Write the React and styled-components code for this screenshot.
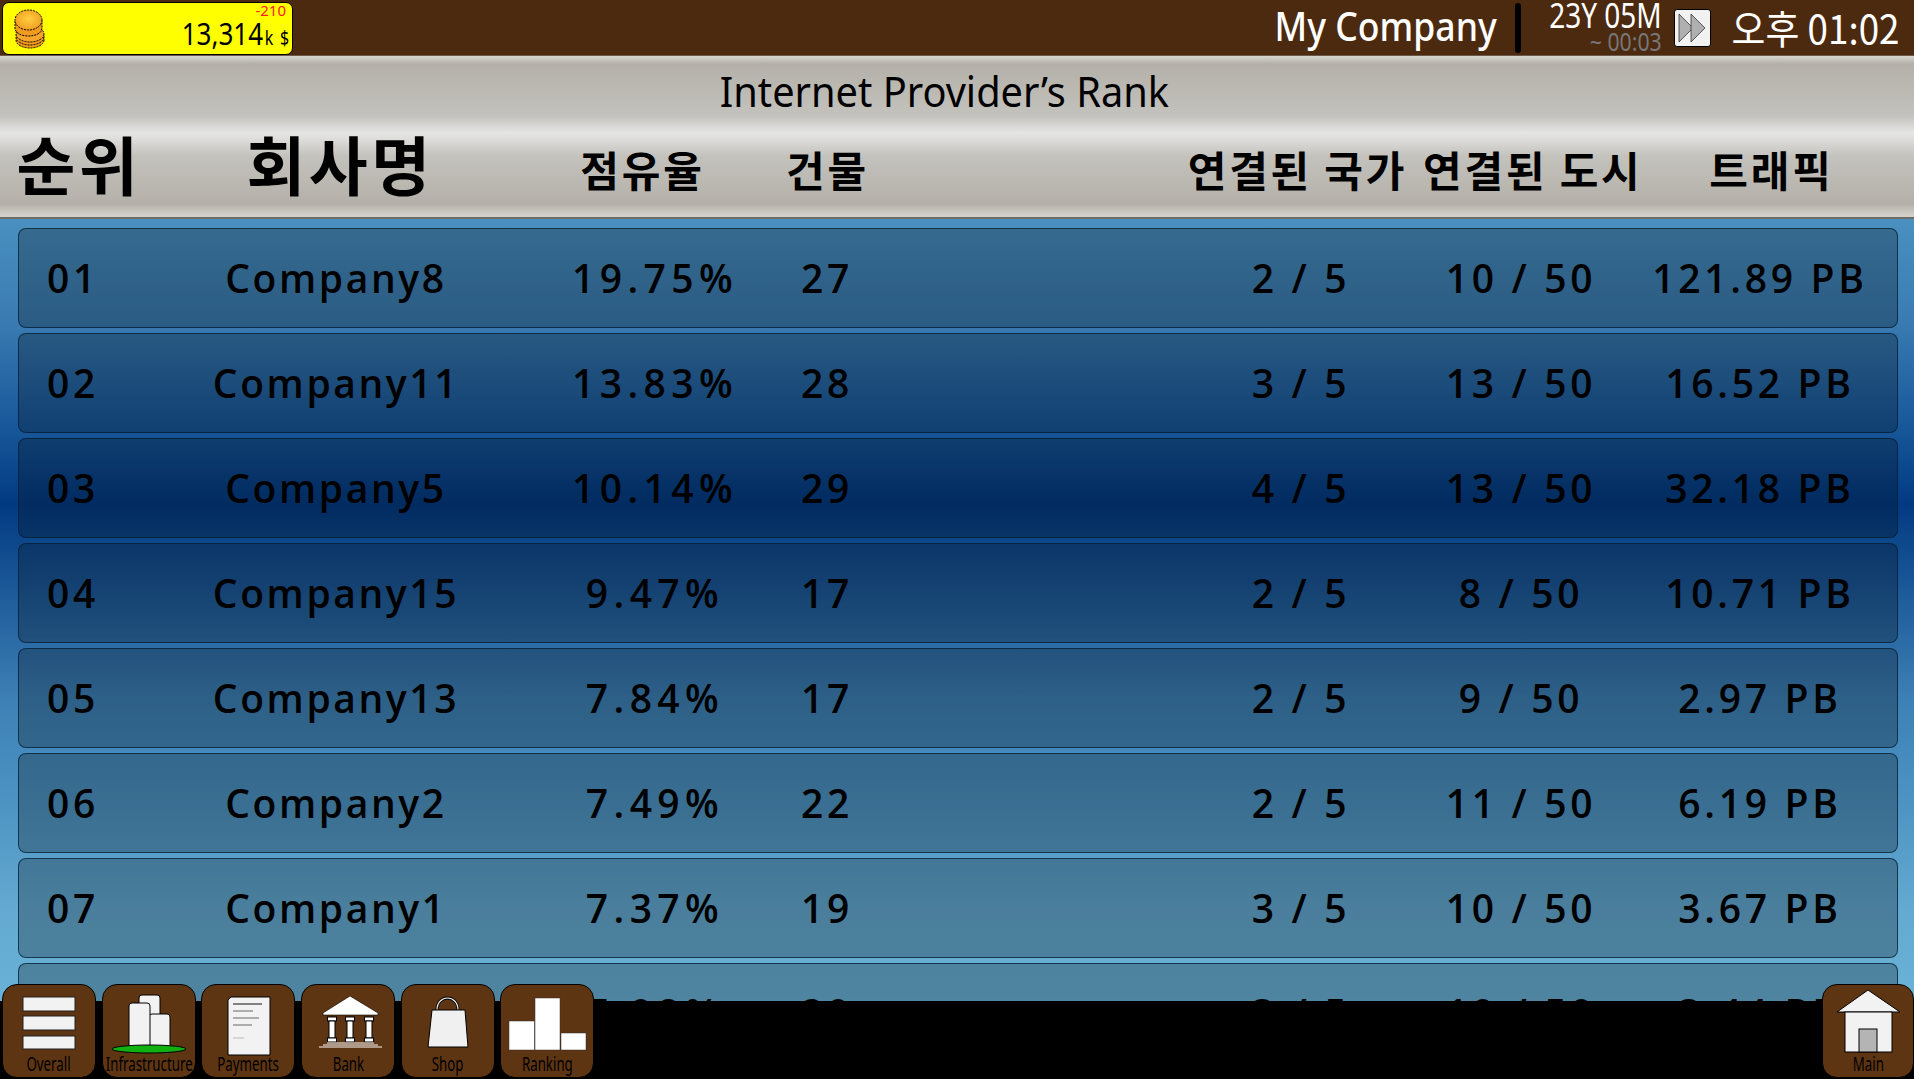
import React from "react";
import styled, { createGlobalStyle } from "styled-components";

const GlobalStyle = createGlobalStyle`
  html, body {
    margin: 0;
    padding: 0;
    height: 100%;
    background: #000;
    overflow: hidden;
  }
  #root {
    height: 100%;
  }
`;

const SANS = `"Noto Sans", "Noto Sans CJK KR", sans-serif`;
const CJK = `"Noto Sans CJK KR", "Noto Sans", sans-serif`;

const Page = styled.div`
  width: 1914px;
  height: 1079px;
  display: flex;
  flex-direction: column;
  overflow: hidden;
`;

const TopBar = styled.header`
  height: 55px;
  flex: none;
  background: #4c2a10;
  border-bottom: 1px solid #6b5a4c;
  display: flex;
  align-items: center;
  justify-content: space-between;
  padding: 0 15px 0 2px;
  color: #fff;
  font-family: ${SANS};
`;

const Money = styled.div`
  width: 291px;
  height: 53px;
  margin-top: 1px;
  box-sizing: border-box;
  background: #ffff00;
  border: 1px solid #000;
  border-radius: 7px;
  display: flex;
  align-items: center;
  justify-content: space-between;
  padding: 0 2px 0 11px;
  color: #000;
`;

const MoneyText = styled.div`
  display: flex;
  flex-direction: column;
  align-items: flex-end;
`;

const MoneyDelta = styled.span`
  color: #ff2020;
  font-size: 15px;
  line-height: 15px;
  margin-right: 4px;
`;

const MoneyValue = styled.span`
  font-size: 31px;
  line-height: 31px;
  transform: scaleX(0.84);
  transform-origin: right center;

  small {
    font-size: 19px;
    margin-left: 2px;
    letter-spacing: 1.5px;
  }
`;

const StatusGroup = styled.div`
  display: flex;
  align-items: center;
`;

const CompanyName = styled.span`
  font-size: 40px;
  line-height: 50px;
  margin-bottom: 3px;
  font-weight: 500;
  transform: scaleX(0.89);
  transform-origin: right center;
`;

const Divider = styled.span`
  width: 6px;
  height: 50px;
  border-radius: 3px;
  background: #000;
  margin: 0 0 0 18px;
`;

const DateBlock = styled.div`
  display: flex;
  flex-direction: column;
  align-items: flex-end;
  margin-bottom: 5px;
`;

const DateMain = styled.span`
  font-size: 35px;
  line-height: 32px;
  transform: scaleX(0.8);
  transform-origin: right center;
`;

const DateSub = styled.span`
  font-size: 25px;
  line-height: 20px;
  color: #777;
  transform: scaleX(0.85);
  transform-origin: right center;
`;

const SpeedButton = styled.button`
  width: 37px;
  height: 38px;
  margin: 0 6px 0 12px;
  padding: 0;
  background: #f2f2f2;
  border: 1px solid #000;
  border-radius: 3px;
  display: flex;
  align-items: center;
  justify-content: center;
`;

const Clock = styled.span`
  font-family: ${CJK};
  font-size: 40px;
  line-height: 55px;
  transform: scaleX(0.92);
  transform-origin: right center;
`;

const RankHeader = styled.div`
  height: 163px;
  flex: none;
  box-sizing: border-box;
  border-bottom: 2px solid #6f6c68;
  background: linear-gradient(
    to bottom,
    #d8d6d0 0,
    #b4b0a9 8px,
    #c4c2bd 60px,
    #e6e6e6 77px,
    #c4c2bd 100px,
    #b4b0a9 148px,
    #d2cfca 159px,
    #d2cfca 100%
  );
  color: #000;
`;

const Title = styled.h1`
  margin: 0;
  height: 63px;
  padding: 5px 26px 0 0;
  box-sizing: border-box;
  text-align: center;
  font-family: ${SANS};
  font-size: 41px;
  font-weight: 400;
  line-height: 60px;
  transform: scaleX(0.97);
`;

const HeaderGrid = styled.div`
  display: grid;
  grid-template-columns: 152px 370px 238px 132px 280px 248px 216px 268px;
  align-items: center;
  height: 86px;
`;

const HeaderCell = styled.span`
  text-align: center;
  font-family: ${CJK};
  font-weight: 700;
  font-size: ${(p) => (p.$large ? 64 : 42)}px;
  letter-spacing: ${(p) => (p.$large ? 3.5 : 2.8)}px;
  line-height: 1;
  padding: ${(p) => (p.$large ? 0 : 14)}px 0 0 ${(p) => (p.$large ? 6 : 3)}px;
  white-space: nowrap;
  grid-column: ${(p) => p.$col || "auto"};
`;

const List = styled.main`
  flex: 1;
  min-height: 0;
  overflow: hidden;
  display: flex;
  flex-direction: column;
  gap: 5px;
  padding: 9px 16px 0 18px;
  background: linear-gradient(
    to bottom,
    #4a90c0 0,
    #3a7cb2 100px,
    #1a5a9c 200px,
    #023a82 285px,
    #3d80b5 480px,
    #4d94c3 585px,
    #63a9d1 690px,
    #6ab2d6 783px
  );
`;

const Row = styled.div`
  flex: none;
  height: 100px;
  box-sizing: border-box;
  border: 1px solid rgba(5, 30, 50, 0.75);
  border-radius: 8px;
  background: rgba(0, 0, 0, 0.25);
  display: grid;
  grid-template-columns: 108px 418px 220px 124px 300px 224px 216px 262px;
  align-items: center;
  color: #000;
  font-family: "Open Sans", sans-serif;
  font-size: 39px;
  font-weight: 600;
  letter-spacing: 3.7px;
  white-space: nowrap;
`;

const Cell = styled.span`
  text-align: center;
  padding-bottom: 1px;
  grid-column: ${(p) => p.$col || "auto"};
  letter-spacing: ${(p) => p.$spacing || "inherit"};
`;

const Dock = styled.footer`
  height: 77px;
  flex: none;
  background: #000;
  display: flex;
  align-items: flex-end;
  gap: 5.7px;
  padding: 0 0 1px 2px;
  position: relative;
`;

const DockButton = styled.button`
  width: ${(p) => p.$width || 94}px;
  height: 94px;
  flex: none;
  margin-left: ${(p) => (p.$end ? "auto" : 0)};
  box-sizing: border-box;
  padding: 0;
  background: #5e3513;
  border: 1px solid #000;
  border-radius: 15px;
  display: flex;
  flex-direction: column;
  align-items: center;
  font: inherit;
  color: #000;
`;

const DockIcon = styled.svg`
  width: 88px;
  height: 60px;
  flex: none;
  margin-top: 11px;
  overflow: visible;
`;

const DockLabel = styled.span`
  font-family: ${SANS};
  font-size: 19px;
  line-height: 17px;
  white-space: nowrap;
  transform: scaleX(0.7);
`;

const CoinIcon = () => (
  <svg width="32" height="42" viewBox="0 0 32 42">
    <defs>
      <radialGradient id="coin" cx="50%" cy="45%" r="60%">
        <stop offset="0" stopColor="#ffcf3f" />
        <stop offset="1" stopColor="#f09a20" />
      </radialGradient>
    </defs>
    <g stroke="#000" strokeDasharray="2 1" strokeWidth="1">
      <ellipse cx="16" cy="33" rx="14" ry="8" fill="#f09a20" />
      <ellipse cx="16" cy="30" rx="14" ry="8" fill="#f09a20" />
      <ellipse cx="16" cy="27" rx="14" ry="8" fill="#f4a52a" />
      <path d="M1 14v7c0 5 6 8 13.5 8S28 26 28 21v-7" fill="#f09a20" />
      <ellipse cx="14.5" cy="13" rx="13.5" ry="10" fill="url(#coin)" />
    </g>
  </svg>
);

const FastForward = () => (
  <svg width="30" height="32" viewBox="0 0 30 32">
    <path d="M2 2 L16 16 L2 30 Z" fill="#b0b0b0" stroke="#222" strokeWidth="0.7" />
    <path d="M14 2 L28 16 L14 30 Z" fill="#b0b0b0" stroke="#222" strokeWidth="0.7" />
  </svg>
);

const OverallIcon = () => (
  <DockIcon viewBox="0 0 88 60">
    <g fill="#f2f2f2" stroke="#222" strokeWidth="1">
      <rect x="18" y="1" width="52" height="14" />
      <rect x="18" y="20" width="52" height="14" />
      <rect x="18" y="40" width="52" height="13" />
    </g>
  </DockIcon>
);

const InfraIcon = () => (
  <DockIcon viewBox="0 0 88 60">
    <g fill="#f2f2f2" stroke="#000" strokeWidth="1">
      <rect x="34" y="-1" width="21" height="40" rx="3" />
      <rect x="44" y="18" width="21" height="35" rx="3" />
      <rect x="24" y="7" width="21" height="46" rx="3" />
    </g>
    <ellipse cx="44" cy="53" rx="37" ry="4" fill="#10b010" stroke="#000" strokeWidth="1" />
  </DockIcon>
);

const PaymentsIcon = () => (
  <DockIcon viewBox="0 0 88 60">
    <path d="M24 4 L27 1 H66 V59 H24 Z" fill="#f2f2f2" stroke="#000" strokeWidth="1" />
    <g strokeWidth="1">
      <path d="M29 8 H58" stroke="#111" />
      <path d="M29 15 H49" stroke="#666" />
      <path d="M29 22 H55" stroke="#666" />
      <path d="M29 29 H48" stroke="#666" />
      <path d="M29 42 H40" stroke="#bbb" />
    </g>
  </DockIcon>
);

const BankColumn = ({ x }) => (
  <g fill="#fff" stroke="#000" strokeWidth="1">
    <rect x={x - 4.5} y="21" width="9" height="4" />
    <rect x={x - 3} y="25" width="6" height="17" />
    <rect x={x - 4.5} y="42" width="9" height="4" />
  </g>
);

const BankIcon = () => (
  <DockIcon viewBox="0 0 88 60">
    <path d="M46 0 L74 17 V19 H19 V17 Z" fill="#fff" stroke="#000" strokeWidth="0.6" />
    <BankColumn x={28} />
    <BankColumn x={46} />
    <BankColumn x={65} />
    <path d="M23 47 H70 M19 49 H74 M15 51 H78" stroke="#fff" strokeWidth="1.2" />
  </DockIcon>
);

const ShopIcon = () => (
  <DockIcon viewBox="0 0 88 60">
    <path d="M33 14 C33 -2 54 -2 54 14" fill="none" stroke="#000" strokeWidth="3" />
    <path d="M33 14 C33 -2 54 -2 54 14" fill="none" stroke="#eee" strokeWidth="1.2" />
    <path d="M28 14 H61 L64 51 H24 Z" fill="#f0f0f0" stroke="#000" strokeWidth="1" />
  </DockIcon>
);

const RankingIcon = () => (
  <DockIcon viewBox="0 0 88 60">
    <g fill="#fff" stroke="#333" strokeWidth="0.5">
      <rect x="6" y="25" width="25.5" height="29" />
      <rect x="32" y="2" width="25" height="52" />
      <rect x="58" y="37" width="25" height="17" />
    </g>
  </DockIcon>
);

const HomeIcon = () => (
  <DockIcon viewBox="0 0 88 60">
    <path d="M44 -6 L13 16 H76 Z" fill="#f2f2f2" stroke="#000" strokeWidth="1" />
    <rect x="21" y="16" width="47" height="40" fill="#f2f2f2" stroke="#000" strokeWidth="1" />
    <rect x="35" y="33" width="18" height="23" fill="#b4b4b4" stroke="#000" strokeWidth="1" />
  </DockIcon>
);

const ranks = [
  ["01", "Company8", "19.75%", "27", "2 / 5", "10 / 50", "121.89 PB"],
  ["02", "Company11", "13.83%", "28", "3 / 5", "13 / 50", "16.52 PB"],
  ["03", "Company5", "10.14%", "29", "4 / 5", "13 / 50", "32.18 PB"],
  ["04", "Company15", "9.47%", "17", "2 / 5", "8 / 50", "10.71 PB"],
  ["05", "Company13", "7.84%", "17", "2 / 5", "9 / 50", "2.97 PB"],
  ["06", "Company2", "7.49%", "22", "2 / 5", "11 / 50", "6.19 PB"],
  ["07", "Company1", "7.37%", "19", "3 / 5", "10 / 50", "3.67 PB"],
  ["08", "Company9", "7.08%", "20", "3 / 5", "10 / 50", "3.44 PB"],
];

const dockItems = [
  ["Overall", OverallIcon],
  ["Infrastructure", InfraIcon],
  ["Payments", PaymentsIcon],
  ["Bank", BankIcon],
  ["Shop", ShopIcon],
  ["Ranking", RankingIcon],
];

const App = () => (
  <Page>
    <GlobalStyle />
    <TopBar>
      <Money>
        <CoinIcon />
        <MoneyText>
          <MoneyDelta>-210</MoneyDelta>
          <MoneyValue>
            13,314<small>k $</small>
          </MoneyValue>
        </MoneyText>
      </Money>
      <StatusGroup>
        <CompanyName>My Company</CompanyName>
        <Divider />
        <DateBlock>
          <DateMain>23Y 05M</DateMain>
          <DateSub>~ 00:03</DateSub>
        </DateBlock>
        <SpeedButton aria-label="fast forward">
          <FastForward />
        </SpeedButton>
        <Clock>오후 01:02</Clock>
      </StatusGroup>
    </TopBar>

    <RankHeader>
      <Title>Internet Provider’s Rank</Title>
      <HeaderGrid>
        <HeaderCell $large>순위</HeaderCell>
        <HeaderCell $large>회사명</HeaderCell>
        <HeaderCell>점유율</HeaderCell>
        <HeaderCell>건물</HeaderCell>
        <HeaderCell $col={6}>연결된 국가</HeaderCell>
        <HeaderCell>연결된 도시</HeaderCell>
        <HeaderCell>트래픽</HeaderCell>
      </HeaderGrid>
    </RankHeader>

    <List>
      {ranks.map(([rank, name, share, buildings, nations, cities, traffic]) => (
        <Row key={rank}>
          <Cell>{rank}</Cell>
          <Cell $spacing="2.6px">{name}</Cell>
          <Cell $spacing="5.4px">{share}</Cell>
          <Cell>{buildings}</Cell>
          <Cell $col={6}>{nations}</Cell>
          <Cell>{cities}</Cell>
          <Cell>{traffic}</Cell>
        </Row>
      ))}
    </List>

    <Dock>
      {dockItems.map(([label, Icon]) => (
        <DockButton key={label}>
          <Icon />
          <DockLabel>{label}</DockLabel>
        </DockButton>
      ))}
      <DockButton $end $width={92}>
        <HomeIcon />
        <DockLabel>Main</DockLabel>
      </DockButton>
    </Dock>
  </Page>
);

export default App;
